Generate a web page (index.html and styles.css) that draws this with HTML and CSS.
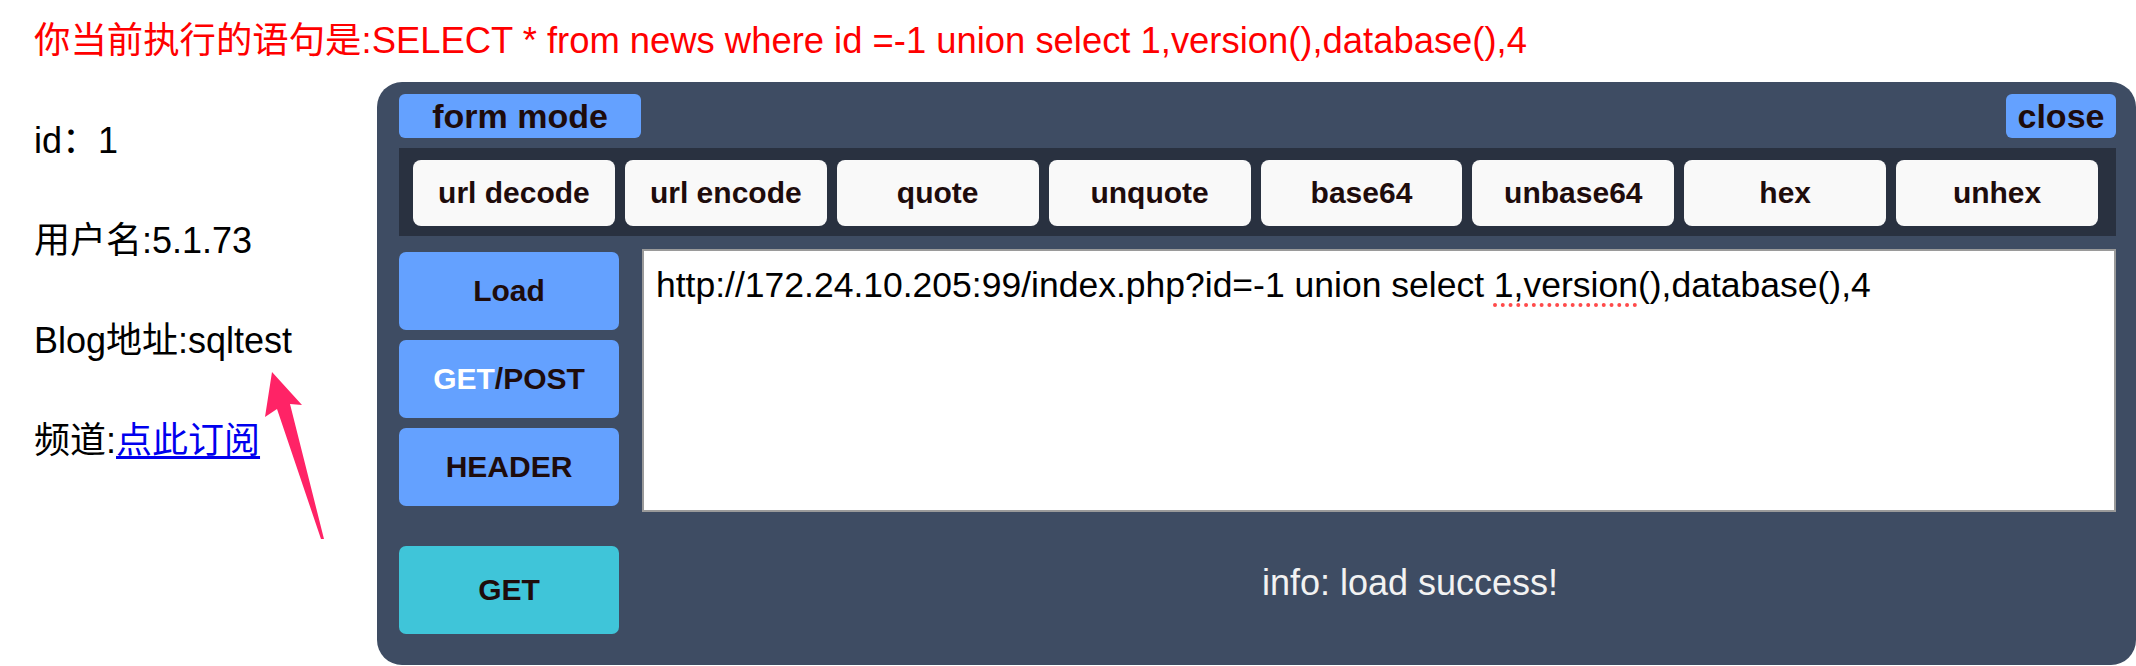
FILE: index.html
```html
<!DOCTYPE html>
<html lang="zh-CN">
<head>
<meta charset="utf-8">
<title>news</title>
<link rel="stylesheet" href="styles.css">
</head>
<body>
<div class="page">
  <div class="sql">你当前执行的语句是:SELECT * from news where id =-1 union select 1,version(),database(),4</div>
  <div class="fields">
    <div class="field">id：1</div>
    <div class="field">用户名:5.1.73</div>
    <div class="field">Blog地址:sqltest</div>
    <div class="field">频道:<a class="link" href="#">点此订阅</a></div>
  </div>
</div>

<svg class="arrow" width="70" height="180" viewBox="0 0 70 180" aria-hidden="true">
  <polygon points="12,7 42,40 30,39 64,174 61,174 17,44 5,52" fill="#ff2366"/>
</svg>

<div class="panel">
  <div class="panel-head">
    <div class="tag tag-mode">form mode</div>
    <div class="tag tag-close">close</div>
  </div>
  <div class="toolbar">
    <div class="tool">url decode</div>
    <div class="tool">url encode</div>
    <div class="tool">quote</div>
    <div class="tool">unquote</div>
    <div class="tool">base64</div>
    <div class="tool">unbase64</div>
    <div class="tool">hex</div>
    <div class="tool">unhex</div>
  </div>
  <div class="main">
    <div class="side">
      <div class="act">Load</div>
      <div class="act"><span class="on">GET</span>/POST</div>
      <div class="act">HEADER</div>
    </div>
    <div class="urlbox">http://172.24.10.205:99/index.php?id=-1 union select <span class="spell">1,version</span>(),database(),4</div>
  </div>
  <div class="foot">
    <div class="send">GET</div>
    <div class="info">info: load success!</div>
  </div>
</div>
</body>
</html>
```

FILE: styles.css
```css
html, body {
  margin: 0;
  padding: 0;
  background: #ffffff;
}

body {
  font-family: "Liberation Sans", Arial, "Noto Sans CJK SC", sans-serif;
  font-size: 36px;
  color: #000000;
  width: 2136px;
  height: 666px;
  overflow: hidden;
  position: relative;
}

.page {
  padding: 16px 0 0 34px;
}

.sql {
  color: #ff0000;
  font-size: 36.4px;
  line-height: 50px;
  white-space: nowrap;
}

.fields {
  margin-top: 2px;
}

.field {
  line-height: 50px;
  margin-top: 50px;
  white-space: nowrap;
}

.link {
  color: #0000ee;
  text-decoration: underline;
  text-underline-offset: 3px;
}

.arrow {
  position: absolute;
  left: 260px;
  top: 365px;
}

.panel {
  position: absolute;
  left: 377px;
  top: 82px;
  width: 1759px;
  height: 583px;
  box-sizing: border-box;
  padding: 12px 20px 0 22px;
  background: #3e4c63;
  border-radius: 25px;
  font-weight: bold;
  color: #1e0c0c;
}

.panel-head {
  display: flex;
  justify-content: space-between;
  height: 44px;
}

.tag {
  height: 44px;
  display: flex;
  align-items: center;
  justify-content: center;
  background: #64a1ff;
  border-radius: 6px;
  font-size: 34px;
}

.tag-mode {
  width: 242px;
}

.tag-close {
  width: 110px;
}

.toolbar {
  margin-top: 10px;
  display: flex;
  gap: 10px;
  padding: 12px 18px 10px 14px;
  background: #293140;
}

.tool {
  flex: 1;
  height: 66px;
  display: flex;
  align-items: center;
  justify-content: center;
  background: #f9f9f9;
  border-radius: 8px;
  font-size: 30px;
}

.main {
  margin-top: 13px;
  display: flex;
  gap: 23px;
}

.side {
  width: 220px;
  padding-top: 3px;
  display: flex;
  flex-direction: column;
  gap: 10px;
}

.act {
  height: 78px;
  display: flex;
  align-items: center;
  justify-content: center;
  background: #64a1ff;
  border-radius: 7px;
  font-size: 30px;
}

.on {
  color: #ffffff;
}

.urlbox {
  flex: 1;
  height: 263px;
  box-sizing: border-box;
  background: #ffffff;
  border: 2px solid #9a9a9a;
  padding: 14px 12px;
  font-weight: normal;
  font-size: 35.5px;
  color: #000000;
  white-space: nowrap;
  overflow: hidden;
}

.spell {
  text-decoration: underline dotted #ff4a4a;
  text-decoration-thickness: 4px;
  text-underline-offset: 6px;
}

.foot {
  margin-top: 34px;
  display: flex;
  gap: 23px;
}

.send {
  width: 220px;
  height: 88px;
  display: flex;
  align-items: center;
  justify-content: center;
  background: #3fc5d9;
  border-radius: 7px;
  font-size: 30px;
}

.info {
  flex: 1;
  padding: 16px 0 0 62px;
  text-align: center;
  line-height: 41px;
  font-weight: normal;
  font-size: 36px;
  color: #f2f2f2;
}
```
